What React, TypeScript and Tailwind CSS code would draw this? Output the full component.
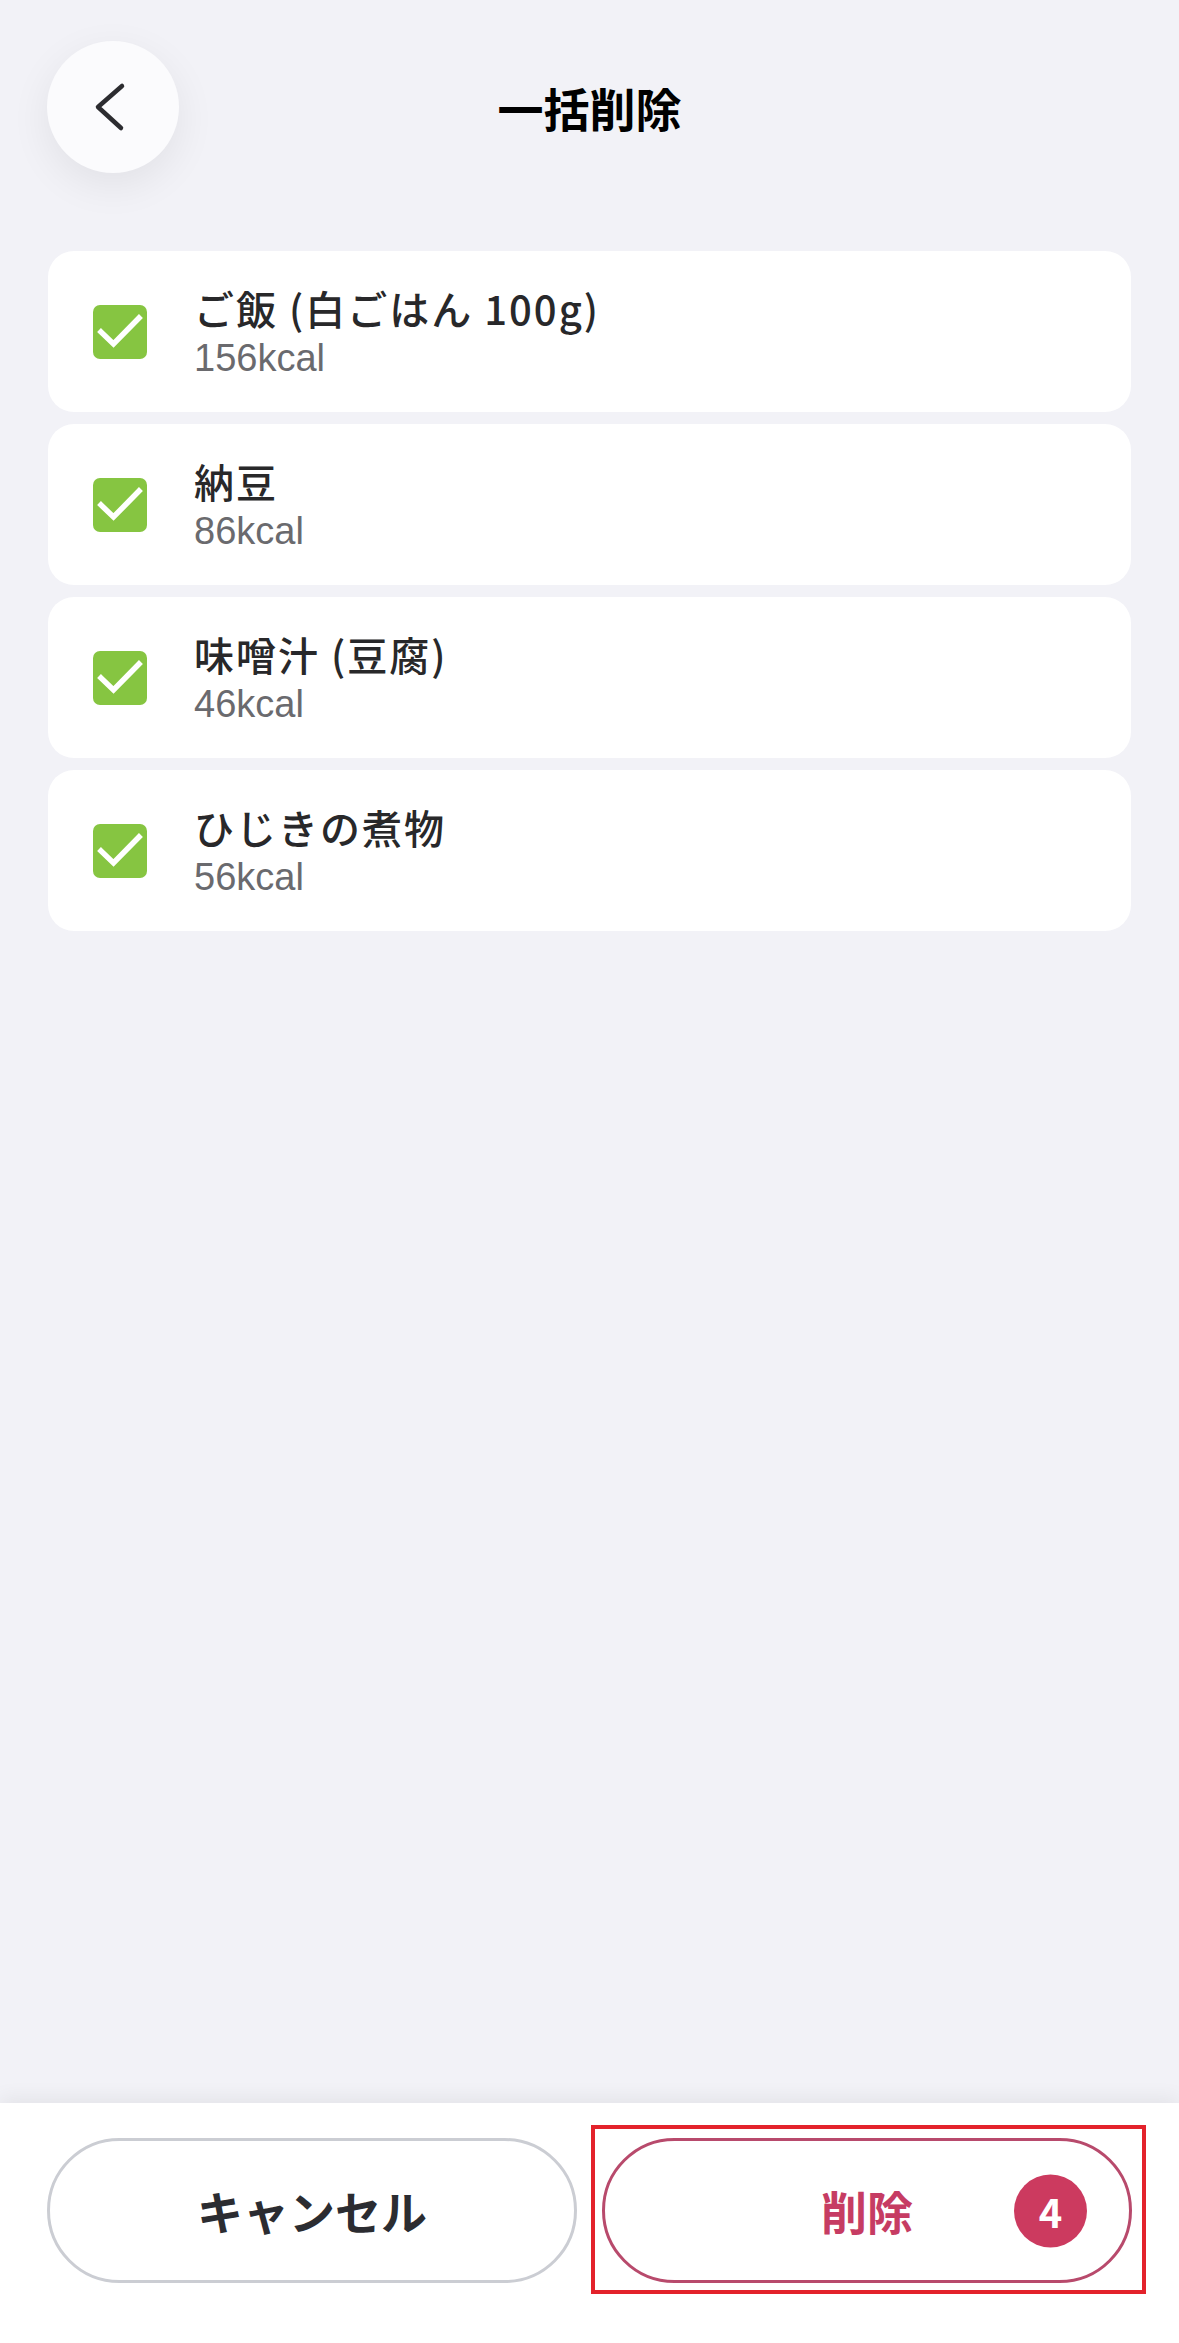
import React from "react";

const items = [
  { name: "ご飯 (白ごはん 100g)", kcal: "156kcal" },
  { name: "納豆", kcal: "86kcal" },
  { name: "味噌汁 (豆腐)", kcal: "46kcal" },
  { name: "ひじきの煮物", kcal: "56kcal" },
];

function Check() {
  return (
    <div className="w-[54px] h-[54px] rounded-[7px] bg-[#86c541] shrink-0 flex items-center justify-center">
      <svg width="54" height="54" viewBox="0 0 54 54" fill="none">
        <path d="M8 27 L20.5 39 L46 13" stroke="#ffffff" strokeWidth="5.5" strokeLinecap="square" strokeLinejoin="miter" />
      </svg>
    </div>
  );
}

export default function App() {
  const jp = { fontFamily: '"Noto Sans CJK JP", "Noto Sans", sans-serif' };
  return (
    <div className="min-h-[2343px] w-full bg-[#f2f2f7] flex flex-col" style={jp}>
      <header className="pt-[41px] px-[47px] grid grid-cols-[132px_1fr_132px] items-center">
        <button className="w-[132px] h-[132px] rounded-full bg-[#fbfbfd] shadow-[0_12px_40px_rgba(0,0,0,0.07)] flex items-center justify-center">
          <svg width="132" height="132" viewBox="0 0 132 132" fill="none">
            <path d="M75 45 L51 66 L74 87" stroke="#2c2c30" strokeWidth="4.5" strokeLinecap="round" strokeLinejoin="round" />
          </svg>
        </button>
        <h1 className="text-center text-[46px] leading-[60px] font-bold text-black">一括削除</h1>
        <div />
      </header>

      <main className="mt-[78px] px-[48px] flex flex-col gap-[12px]">
        {items.map((it) => (
          <div key={it.name} className="h-[161px] bg-white rounded-[26px] flex items-center pl-[45px]">
            <Check />
            <div className="ml-[47px] pt-[4px] flex flex-col">
              <div className="text-[40px] leading-[48px] font-medium tracking-[2px] text-[#28282a]">{it.name}</div>
              <div
                className="text-[38px] leading-[52px] text-[#6a6a6e]"
                style={{ fontFamily: '"Liberation Sans", Arial, sans-serif' }}
              >
                {it.kcal}
              </div>
            </div>
          </div>
        ))}
      </main>

      <div className="flex-1" />

      <footer className="bg-white shadow-[0_-6px_18px_rgba(0,0,0,0.06)] pt-[35px] pb-[60px] px-[47px] flex gap-[25px]">
        <button className="flex-1 h-[145px] rounded-full border-[3px] border-[#cbcdd3] bg-white flex items-center justify-center text-[46px] font-bold text-[#2b2c31]">
          キャンセル
        </button>
        <button className="relative flex-1 h-[145px] rounded-full border-[3px] border-[#b84a6c] bg-white flex items-center justify-center text-[46px] font-bold text-[#c63c63]">
          削除
          <span className="absolute right-[42px] top-1/2 -translate-y-1/2 w-[73px] h-[73px] rounded-full bg-[#cc3a5f] text-white text-[40px] font-bold flex items-center justify-center">
            4
          </span>
          <span className="absolute top-[-16px] left-[-14px] right-[-17px] bottom-[-14px] border-4 border-[#e3222b] pointer-events-none" />
        </button>
      </footer>
    </div>
  );
}
